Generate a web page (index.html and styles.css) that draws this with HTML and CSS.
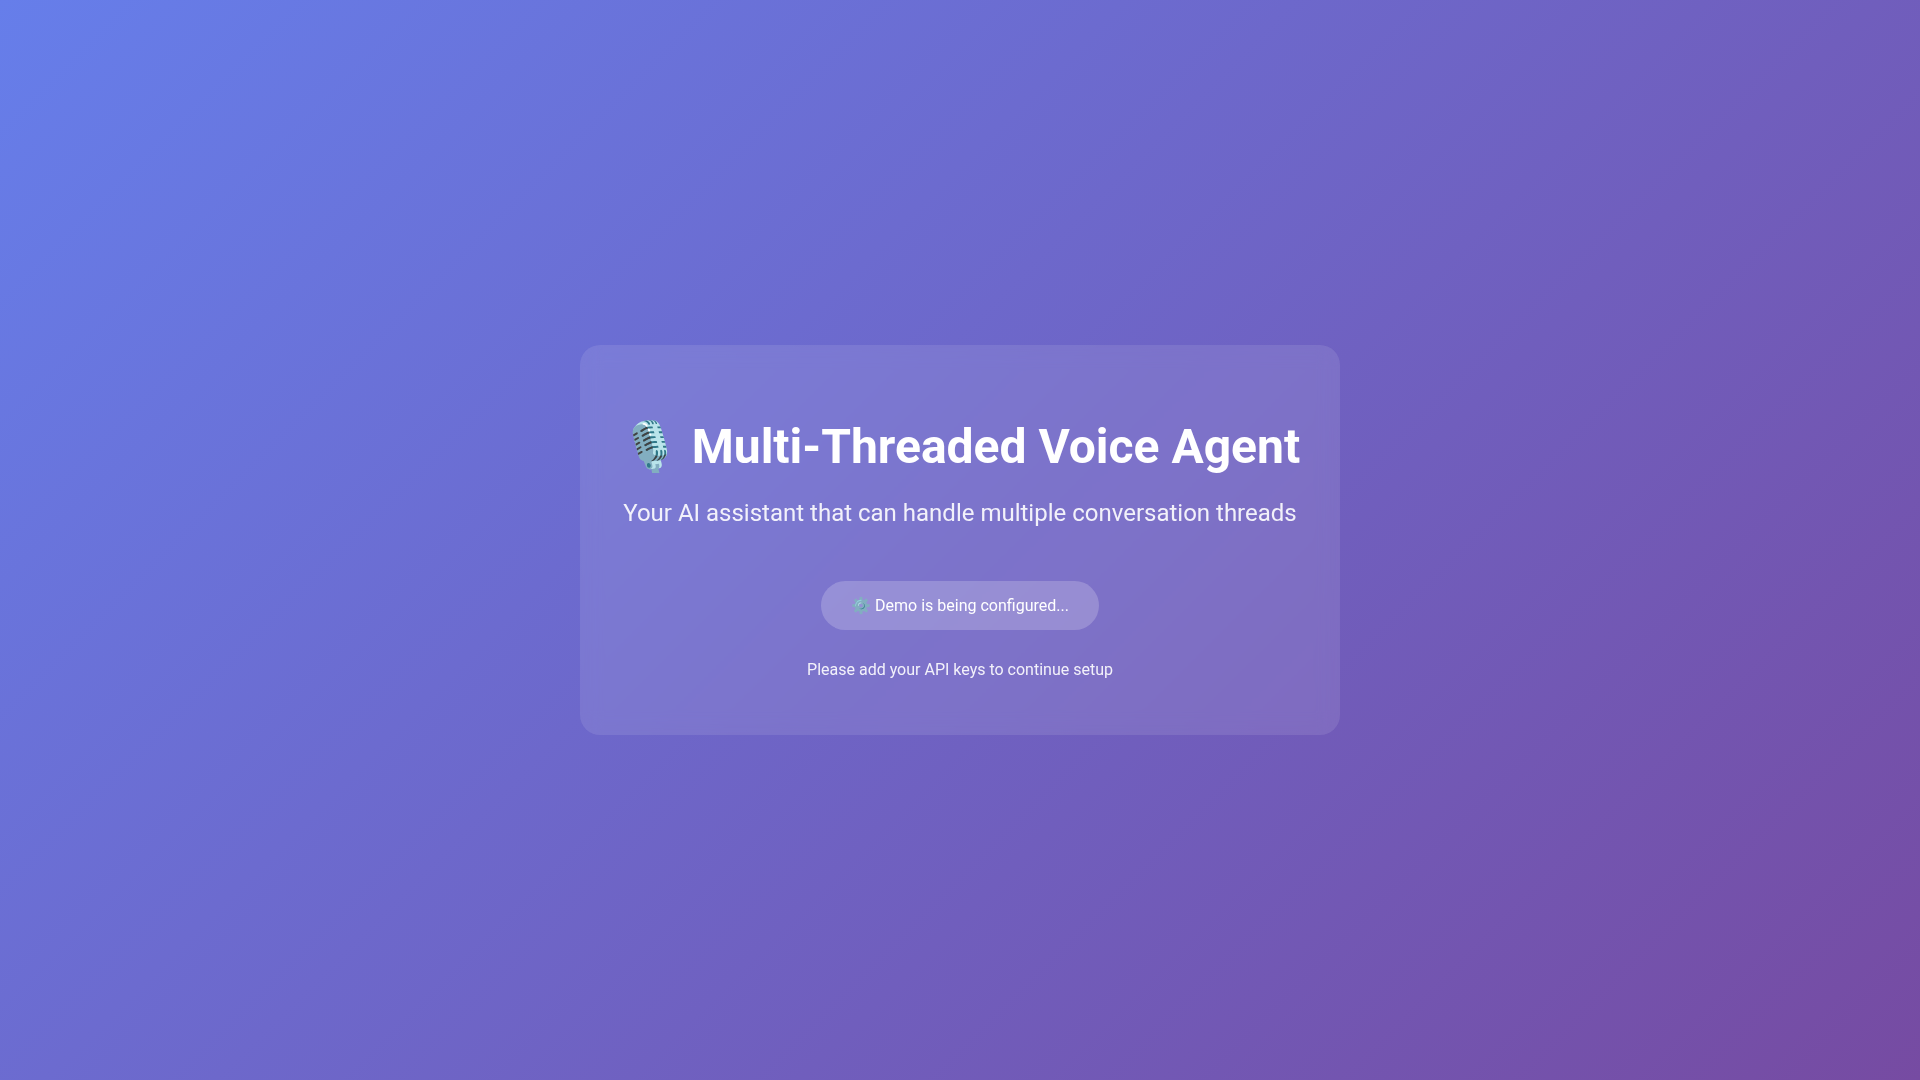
FILE: index.html
```html
<!DOCTYPE html>
<html lang="en">
<head>
  <meta charset="UTF-8">
  <meta name="viewport" content="width=device-width, initial-scale=1.0">
  <title>Multi-Threaded Voice Agent</title>
  <link rel="stylesheet" href="styles.css">
</head>
<body>
  <main class="container">
    <h1>🎙️ Multi-Threaded Voice Agent</h1>
    <p class="subtitle">Your AI assistant that can handle multiple conversation threads</p>
    <div class="status">⚙️ Demo is being configured...</div>
    <p class="hint">Please add your API keys to continue setup</p>
  </main>
</body>
</html>
```

FILE: styles.css
```css
body {
  font-family: Roboto, sans-serif;
  background: linear-gradient(135deg, #667eea 0%, #764ba2 100%);
  color: white;
  margin: 0;
  min-height: 100vh;
  display: flex;
  align-items: center;
  justify-content: center;
}

.container {
  text-align: center;
  padding: 40px;
  background: rgba(255, 255, 255, 0.1);
  border-radius: 20px;
  backdrop-filter: blur(10px);
}

h1 {
  font-size: 48px;
  margin: 33px 0 24px;
}

p {
  opacity: 0.9;
}

.subtitle {
  font-size: 24px;
  margin: 0 0 54px;
}

.status {
  display: inline-block;
  padding: 15px 30px;
  background: rgba(255, 255, 255, 0.2);
  border-radius: 30px;
}

.hint {
  margin: 30px 0 16px;
}
```
